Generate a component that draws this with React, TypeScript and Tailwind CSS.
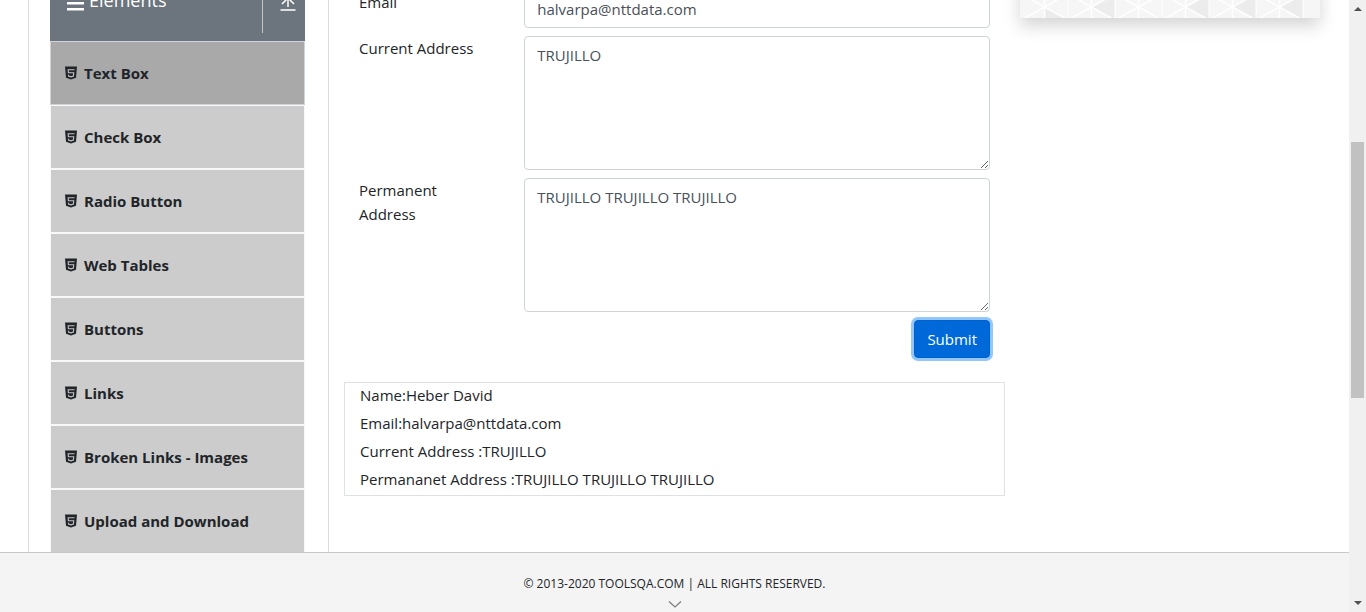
import React from "react";

const menuItems = [
  "Text Box",
  "Check Box",
  "Radio Button",
  "Web Tables",
  "Buttons",
  "Links",
  "Broken Links - Images",
  "Upload and Download",
];

const output = [
  "Name:Heber David",
  "Email:halvarpa@nttdata.com",
  "Current Address :TRUJILLO",
  "Permananet Address :TRUJILLO TRUJILLO TRUJILLO",
];

const tiles = [
  "M23.500 47 47 60H23.500z",
  "M23.500 47 47 34v26z",
  "",
  "M23.500 47 47 34v26z",
  "M23.500 47 47 34v26z",
  "M23.500 47 47 34v26z",
];

function Html5Icon() {
  return (
    <svg className="h-3.5 w-3 shrink-0" viewBox="0 0 12 14" aria-hidden="true">
      <path d="M0 .5h12l-1 11.3L6 13.500 1 11.800z" fill="#212529" />
      <path
        d="M9.500 3.800H3.200l.2 3h5.300L8.400 10 6 10.800 3.600 10l-.1-1.200"
        fill="none"
        stroke="#c4c4c4"
        strokeWidth="1.1"
      />
    </svg>
  );
}

function Sidebar() {
  return (
    <nav className="w-[301px] shrink-0 border-x border-[#dcdcdc] pr-[23px] pl-[21px]">
      <div className="flex h-[81px] items-stretch bg-[#6c757d] py-2 text-white">
        <div className="flex flex-1 items-center border-r border-[#c4c4c4] pb-0.5 pl-4">
          <svg className="mt-1.5 h-4 w-[18px]" viewBox="0 0 18 16" fill="#fff" aria-hidden="true">
            <path d="M1 1h17v2.500H1zM1 7h17v2.500H1zM1 13h17v2.500H1z" />
          </svg>
          <span className="pl-[5px] text-lg">Elements</span>
        </div>
        <button type="button" aria-label="Collapse" className="flex w-[42px] items-center justify-center pl-2">
          <svg className="h-5 w-4" viewBox="0 0 16 20" fill="none" stroke="#fff" strokeWidth="1.500" aria-hidden="true">
            <path d="M.5 19h15M8 16V7M2 13l6-6 6 6" />
          </svg>
        </button>
      </div>
      <ul>
        {menuItems.map((item, i) => (
          <li key={item}>
            <a
              href="#"
              className={
                i === 0
                  ? "flex h-16 items-center gap-[7px] border border-[#ced4da] bg-[#a9a9a9] px-3.5 font-bold"
                  : "flex h-16 items-center gap-[7px] border border-[#f8f8f8] bg-[#cccccc] px-3.5 font-bold"
              }
            >
              <Html5Icon />
              {item}
            </a>
          </li>
        ))}
      </ul>
    </nav>
  );
}

const fieldClass =
  "block w-full rounded border border-[#ced4da] bg-white px-3 py-1.5 leading-6 text-[#495057] outline-none";

function TextForm() {
  return (
    <main className="min-w-0 flex-1 px-[15px] pt-[30px]">
      <form className="flex flex-col gap-2" onSubmit={(e) => e.preventDefault()}>
        <div className="flex">
          <div className="w-1/4 px-[15px]">
            <label htmlFor="email">Email</label>
          </div>
          <div className="w-3/4 px-[15px]">
            <input id="email" type="email" defaultValue="halvarpa@nttdata.com" className={fieldClass} />
          </div>
        </div>
        <div className="flex">
          <div className="w-1/4 px-[15px]">
            <label htmlFor="current">Current Address</label>
          </div>
          <div className="w-3/4 px-[15px]">
            <textarea id="current" rows={5} defaultValue="TRUJILLO" className={fieldClass} />
          </div>
        </div>
        <div className="flex">
          <div className="w-1/4 px-[15px]">
            <label htmlFor="permanent">Permanent Address</label>
          </div>
          <div className="w-3/4 px-[15px]">
            <textarea id="permanent" rows={5} defaultValue="TRUJILLO TRUJILLO TRUJILLO" className={fieldClass} />
          </div>
        </div>
        <div className="flex justify-end px-[15px]">
          <button
            type="submit"
            className="rounded border border-[#0062cc] bg-[#0069d9] px-3 py-1.5 leading-6 text-white ring-3 ring-[#93c6ff]"
          >
            Submit
          </button>
        </div>
      </form>
      <div className="mt-6 border border-[#dee2e6] px-[15px]">
        {output.map((line) => (
          <p key={line} className="mb-1">
            {line}
          </p>
        ))}
      </div>
    </main>
  );
}

function Banner() {
  return (
    <aside className="mr-[29px] w-[300px] shrink-0">
      <div className="h-[58px] bg-[#f6f6f6] shadow-[0_8px_16px_rgba(0,0,0,0.17)]">
        <svg className="h-full w-full" viewBox="0 0 300 58" aria-hidden="true">
          {tiles.map((shade, t) => (
            <g key={t} transform={`translate(${t * 47 + 1} 0)`}>
              <path d={shade} fill="#ececec" />
              <path d="M0 34 47 60M47 34 0 60M23.500 30v28" stroke="#ffffff" strokeWidth="1.500" fill="none" />
              <path d="M47 30v28" stroke="#ffffff" strokeWidth="1" />
            </g>
          ))}
        </svg>
      </div>
    </aside>
  );
}

function Scrollbar() {
  return (
    <div className="flex w-[17px] shrink-0 flex-col items-center bg-[#f0f0f0]" aria-hidden="true">
      <svg className="mt-1.5 h-2 w-2" viewBox="0 0 8 8" fill="#505050">
        <path d="M0 5h8L4 1z" />
      </svg>
      <div className="flex-[128]" />
      <div className="w-[13px] flex-[256] bg-[#c1c1c1]" />
      <div className="flex-[200]" />
      <svg className="mb-1.5 h-2 w-2" viewBox="0 0 8 8" fill="#505050">
        <path d="M0 3h8L4 7z" />
      </svg>
    </div>
  );
}

export default function App() {
  return (
    <div className="flex h-screen overflow-hidden bg-white font-['Open_Sans','Noto_Sans',sans-serif] text-[15px] leading-6 text-[#212529]">
      <div className="flex min-w-0 flex-1 flex-col">
        <div className="min-h-0 flex-1 overflow-hidden">
          <div className="-mt-10 flex pl-7">
            <Sidebar />
            <TextForm />
            <Banner />
          </div>
        </div>
        <footer className="flex h-[60px] shrink-0 flex-col items-center border-t border-[#c8c8c8] bg-[#f4f4f4] pt-[19px] text-xs">
          <span className="leading-6">© 2013-2020 TOOLSQA.COM | ALL RIGHTS RESERVED.</span>
          <svg className="mt-1 h-2 w-3.5" viewBox="0 0 14 8" fill="none" stroke="#7c7c7c" strokeWidth="1.200" aria-hidden="true">
            <path d="M1 1.500l6 5.500 6-5.500" />
          </svg>
        </footer>
      </div>
      <Scrollbar />
    </div>
  );
}
